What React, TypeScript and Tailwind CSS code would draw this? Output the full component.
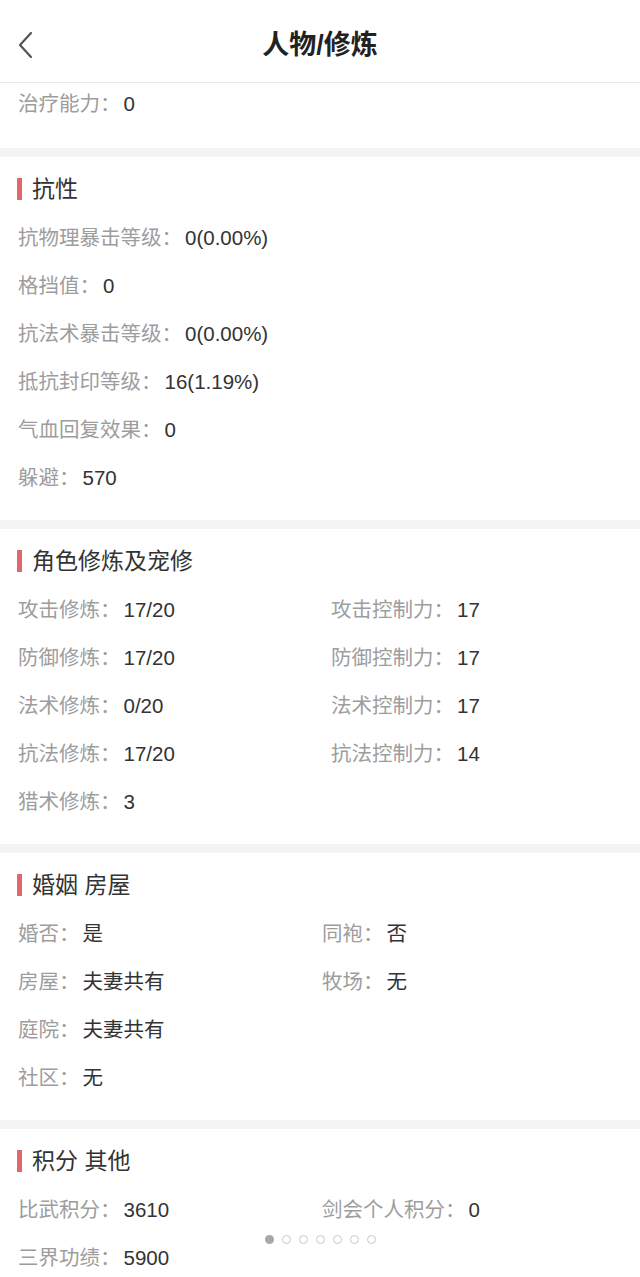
import React from 'react'

type Item = { label: string; value: string }

const FONT = "font-['Liberation_Sans','Noto_Sans_CJK_SC',sans-serif]"

function Row({ items, leftWidth }: { items: Item[]; leftWidth: string }) {
  return (
    <div className="flex h-[48px] items-center px-[18px] text-[20.5px]">
      {items.map((it, i) => (
        <div key={i} className={i === 0 ? `${leftWidth} shrink-0` : ''}>
          <span className="text-[#9d9d9d]">{it.label}：</span>
          <span className="ml-[3px] text-[#333]">{it.value}</span>
        </div>
      ))}
    </div>
  )
}

function Section({ title, rows, leftWidth = 'w-[304px]' }: { title: string; rows: Item[][]; leftWidth?: string }) {
  return (
    <div className="bg-white pt-[8px] pb-[18px]">
      <div className="mb-[1px] flex h-[48px] items-center px-[17px]">
        <span className="mr-[10px] h-[22px] w-[5px] bg-[#e0686b]" />
        <span className="text-[23px] text-[#333]">{title}</span>
      </div>
      {rows.map((r, i) => (
        <Row key={i} items={r} leftWidth={leftWidth} />
      ))}
    </div>
  )
}

function Divider() {
  return <div className="h-[9px] bg-[#f4f4f4]" />
}

export default function App() {
  return (
    <div className={`relative h-[1277px] w-[640px] overflow-hidden bg-white ${FONT}`}>
      <header className="relative flex h-[83px] items-center justify-center border-b border-[#e8e8e8] pt-[9px]">
        <svg className="absolute left-[17px] top-[31px]" width="16" height="28" viewBox="0 0 16 28" fill="none">
          <path d="M14 2 L3 14 L14 26" stroke="#555" strokeWidth="2.2" strokeLinecap="round" strokeLinejoin="round" />
        </svg>
        <h1 className="text-[27px] font-bold text-[#222]">人物/修炼</h1>
      </header>

      <div className="h-[65px] bg-white">
        <div className="flex h-[42px] items-center px-[18px] text-[20.5px]">
          <span className="text-[#9d9d9d]">治疗能力：</span>
          <span className="ml-[3px] text-[#333]">0</span>
        </div>
      </div>

      <Divider />
      <Section
        title="抗性"
        rows={[
          [{ label: '抗物理暴击等级', value: '0(0.00%)' }],
          [{ label: '格挡值', value: '0' }],
          [{ label: '抗法术暴击等级', value: '0(0.00%)' }],
          [{ label: '抵抗封印等级', value: '16(1.19%)' }],
          [{ label: '气血回复效果', value: '0' }],
          [{ label: '躲避', value: '570' }],
        ]}
      />

      <Divider />
      <Section
        title="角色修炼及宠修"
        leftWidth="w-[313px]"
        rows={[
          [{ label: '攻击修炼', value: '17/20' }, { label: '攻击控制力', value: '17' }],
          [{ label: '防御修炼', value: '17/20' }, { label: '防御控制力', value: '17' }],
          [{ label: '法术修炼', value: '0/20' }, { label: '法术控制力', value: '17' }],
          [{ label: '抗法修炼', value: '17/20' }, { label: '抗法控制力', value: '14' }],
          [{ label: '猎术修炼', value: '3' }],
        ]}
      />

      <Divider />
      <Section
        title="婚姻 房屋"
        rows={[
          [{ label: '婚否', value: '是' }, { label: '同袍', value: '否' }],
          [{ label: '房屋', value: '夫妻共有' }, { label: '牧场', value: '无' }],
          [{ label: '庭院', value: '夫妻共有' }],
          [{ label: '社区', value: '无' }],
        ]}
      />

      <Divider />
      <Section
        title="积分 其他"
        rows={[
          [{ label: '比武积分', value: '3610' }, { label: '剑会个人积分', value: '0' }],
          [{ label: '三界功绩', value: '5900' }],
        ]}
      />

      <div className="absolute left-[265px] top-[1235px] flex gap-[8px]">
        <span className="h-[9px] w-[9px] rounded-full bg-[#a8a8a8]" />
        {[0, 1, 2, 3, 4, 5].map((i) => (
          <span key={i} className="h-[9px] w-[9px] rounded-full border border-[#c8c8c8] bg-white" />
        ))}
      </div>
    </div>
  )
}
